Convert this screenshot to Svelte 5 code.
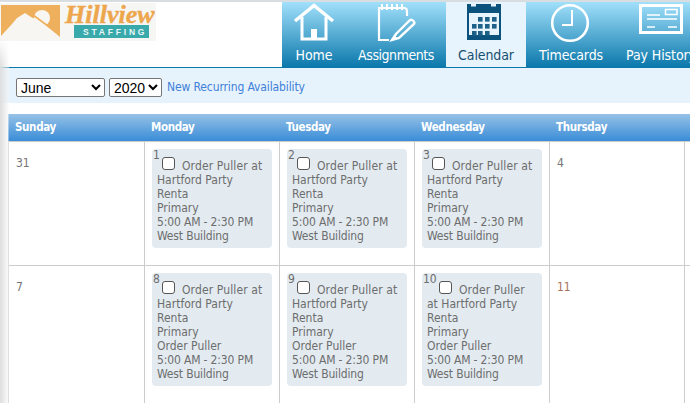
<script>
  const tabs = [
    { name: 'Home', w: 64, icon: 'home' },
    { name: 'Assignments', w: 100, icon: 'assign', tight: true },
    { name: 'Calendar', w: 80, icon: 'cal', active: true },
    { name: 'Timecards', w: 90, icon: 'clock' },
    { name: 'Pay History', w: 90, icon: 'pay' }
  ];
  const days = ['Sunday', 'Monday', 'Tuesday', 'Wednesday', 'Thursday', ''];
  const base = ['Renta', 'Primary'];
  const tail = ['5:00 AM - 2:30 PM', 'West Building'];
  const rows = [
    [
      { d: '31' },
      { d: '1', shift: true },
      { d: '2', shift: true },
      { d: '3', shift: true },
      { d: '4' },
      { d: '' }
    ],
    [
      { d: '7' },
      { d: '8', shift: true, role: true },
      { d: '9', shift: true, role: true },
      { d: '10', shift: true, role: true },
      { d: '11', warm: true },
      { d: '' }
    ]
  ];
  const calCells = [
    [478, 17], [485, 17], [492, 17],
    [472, 24], [478, 24], [485, 24], [492, 24],
    [472, 31], [478, 31], [485, 31]
  ];
</script>

<div class="page">
  <div class="edge"></div>
  <header class="top">
    <div class="logo">
      <svg width="156" height="38" viewBox="0 0 156 38">
        <rect width="156" height="38" fill="#f6f6f4" />
        <rect x="1" y="2" width="59" height="32" fill="#eeb05c" />
        <path d="M1 33 L12 21 L17 15 L25 10 L31 14 L43 20 L60 34 V38 H1Z" fill="#f8f6f2" />
        <circle cx="42" cy="15" r="8" fill="#f8f6f2" />
        <path d="M29 9 L52 26" stroke="#eeb05c" stroke-width="1.6" fill="none" />
        <text class="script" x="65" y="20">Hillview</text>
        <rect x="74" y="22" width="75" height="13" fill="#3aa9ab" />
        <text class="staff" x="83" y="32">STAFFING</text>
      </svg>
    </div>
    <nav class="tabs">
      {#each tabs as t}
        <div class="tab" class:active={t.active} style="width:{t.w}px">
          <svg width="44" height="42" viewBox="0 0 44 42" fill="none" stroke="#fff" stroke-width="3">
            {#if t.icon === 'home'}
              <path d="M3 18 L22 2.5 L41 18" stroke-width="3.5" />
              <path d="M10 14 V36 H34 V14" />
              <rect x="19" y="26" width="6" height="11" fill="#fff" stroke="none" />
            {:else if t.icon === 'assign'}
              <path d="M33 13 V8 Q33 5 30 5 H5 V37 H15" stroke-width="2.2" />
              <path d="M8 1 V7 M13 1 V7 M18 1 V7 M23 1 V7 M28 1 V7" stroke-width="2" />
              <path d="M35 18 L22 31 L18 37 L25 35 L40 21 Q41 19.5 39.5 18 Q37 15.5 35 18Z" stroke-width="2.4" />
              <path d="M18 37 L20 32 L23 35Z" fill="#fff" stroke="none" />
            {:else if t.icon === 'cal'}
              <rect x="3" y="1" width="34" height="36" fill="#0b527c" stroke="none" />
              <rect x="7" y="1" width="5" height="2.5" fill="#e8f4fd" stroke="none" />
              <rect x="27" y="1" width="5" height="2.5" fill="#e8f4fd" stroke="none" />
              <rect x="5" y="10" width="30" height="22" fill="#e8f4fd" stroke="none" />
              <g fill="#1d6189" stroke="none">
                {#each calCells as c}
                  <rect x={c[0] - 464} y={c[1] - 3} width="4.6" height="4.6" />
                {/each}
              </g>
            {:else if t.icon === 'clock'}
              <circle cx="21" cy="20" r="17.8" stroke-width="2.6" />
              <path d="M23 7 V22 H13" stroke-width="2" />
            {:else}
              <rect x="1.5" y="2.5" width="41" height="27" stroke-width="3" />
              <rect x="26.5" y="6.5" width="11.5" height="5" stroke-width="1.5" />
              <path d="M8 12 H21 M8 16 H38 M8 24 H16 M29 24 H38" stroke-width="1.5" />
            {/if}
          </svg>
          <span class:tight={t.tight}>{t.name}</span>
        </div>
      {/each}
    </nav>
  </header>
  <div class="toolbar">
    <select class="month"><option>June</option></select>
    <select class="year"><option>2020</option></select>
    <a href="#recurring">New Recurring Availability</a>
  </div>
  <div class="calendar">
    <div class="head">
      {#each days as d}<div class="hcell">{d}</div>{/each}
    </div>
    {#each rows as row, i}
      <div class="row" class:second={i === 1}>
        {#each row as c}
          <div class="cell">
            {#if c.shift}
              <div class="shift">
                <span class="num">{c.d}</span>
                <div class="first" class:wide={c.d === '10'}>
                  <span class="box"></span>
                  {#if c.d === '10'}Order Puller{:else}Order Puller at{/if}
                </div>
                <div>{c.d === '10' ? 'at Hartford Party' : 'Hartford Party'}</div>
                {#each base as l}<div>{l}</div>{/each}
                {#if c.role}<div>Order Puller</div>{/if}
                {#each tail as l}<div class="tail">{l}</div>{/each}
              </div>
            {:else}
              <span class="plain" class:warm={c.warm}>{c.d}</span>
            {/if}
          </div>
        {/each}
      </div>
    {/each}
  </div>
</div>

<style>
  :global(body) {
    margin: 0;
    background: #fff;
    overflow: hidden;
  }
  .page {
    width: 690px;
    height: 403px;
    overflow: hidden;
    position: relative;
    font-family: "DejaVu Sans", sans-serif;
    font-stretch: condensed;
    font-size: 12px;
    border-top: 2px solid #d8dde2;
    box-sizing: border-box;
  }
  .edge {
    position: absolute;
    left: 0;
    top: 36px;
    bottom: 0;
    width: 9px;
    background: linear-gradient(to right, #dedede, rgba(250, 250, 250, 0.4));
    -webkit-mask-image: linear-gradient(transparent, #000 28px);
    mask-image: linear-gradient(transparent, #000 28px);
    z-index: 2;
  }
  .top {
    display: flex;
    height: 65px;
  }
  .logo {
    width: 282px;
    flex: none;
    line-height: 0;
    padding-top: 1px;
  }
  .script {
    font-family: "Liberation Serif", serif;
    font-style: italic;
    font-weight: bold;
    font-size: 26px;
    fill: #eda64c;
    stroke: #eda64c;
    stroke-width: 0.4;
  }
  .staff {
    font-family: "Liberation Sans", sans-serif;
    font-weight: bold;
    font-size: 8.5px;
    letter-spacing: 2.8px;
    fill: #e8f7f6;
  }
  .tabs {
    display: flex;
    flex: none;
    background: linear-gradient(#a2e0fb, #0b78ab);
  }
  .tab {
    flex: none;
    height: 65px;
    display: flex;
    flex-direction: column;
    align-items: center;
    color: #fff;
    font-size: 14px;
    white-space: nowrap;
  }
  .tab svg {
    flex: none;
    margin-top: 1px;
  }
  .tab span {
    margin-top: 2px;
    line-height: 17px;
    letter-spacing: -0.1px;
  }
  .tab span.tight {
    letter-spacing: -0.45px;
  }
  .tab.active {
    background: #e8f4fd;
    color: #164f70;
  }
  .toolbar {
    height: 36px;
    box-sizing: border-box;
    border-top: 1px solid #0b78ab;
    background: #e6f3fc;
    display: flex;
    align-items: center;
    padding: 3px 0 0 16px;
  }
  select {
    font-family: "Liberation Sans", sans-serif;
    font-size: 14px;
    height: 19px;
    padding: 0;
    background: #fff;
    border: 1px solid #767676;
    border-radius: 2px;
    color: #000;
  }
  .month { width: 89px; margin-right: 4px; }
  .year { width: 53px; margin-right: 5px; }
  a {
    color: #3f80d8;
    text-decoration: none;
    font-size: 12px;
    letter-spacing: -0.12px;
  }
  .calendar {
    margin: 11px 0 0 8px;
    width: 810px;
  }
  .head {
    display: grid;
    grid-template-columns: 136px 135px 135px 135px 135px 134px;
    height: 27px;
    background: linear-gradient(#96c2e6, #3a8cd8);
  }
  .hcell {
    color: #fff;
    font-weight: bold;
    font-size: 11.5px;
    letter-spacing: -0.35px;
    padding: 6px 0 0 7px;
    line-height: 14px;
  }
  .row {
    display: grid;
    grid-template-columns: 136px 135px 135px 135px 135px 134px;
    height: 124px;
    border-top: 1px solid #ccc;
    box-sizing: border-box;
  }
  .row.second {
    height: 150px;
  }
  .cell {
    border-left: 1px solid #ccc;
    box-sizing: border-box;
    color: #757575;
  }
  .plain {
    display: block;
    padding: 14px 0 0 7px;
    line-height: 14px;
  }
  .plain.warm {
    color: #a5745a;
  }
  .shift {
    position: relative;
    margin: 7px 0 0 7px;
    width: 120px;
    background: #e3ebf1;
    border-radius: 4px;
    padding: 10px 5px 5px;
    box-sizing: border-box;
    line-height: 14px;
    color: #6d6d6d;
  }
  .num {
    position: absolute;
    left: 1px;
    top: -1px;
    line-height: 14px;
  }
  .first {
    white-space: nowrap;
    display: flex;
    align-items: center;
    gap: 7px;
    padding-left: 5px;
    letter-spacing: 0.12px;
  }
  .first.wide {
    padding-left: 12px;
  }
  .box {
    width: 13px;
    height: 13px;
    box-sizing: border-box;
    border: 1px solid #555;
    border-radius: 3px;
    background: #fff;
    margin-top: -5px;
    flex: none;
  }
  .tail {
    letter-spacing: -0.15px;
  }
</style>
